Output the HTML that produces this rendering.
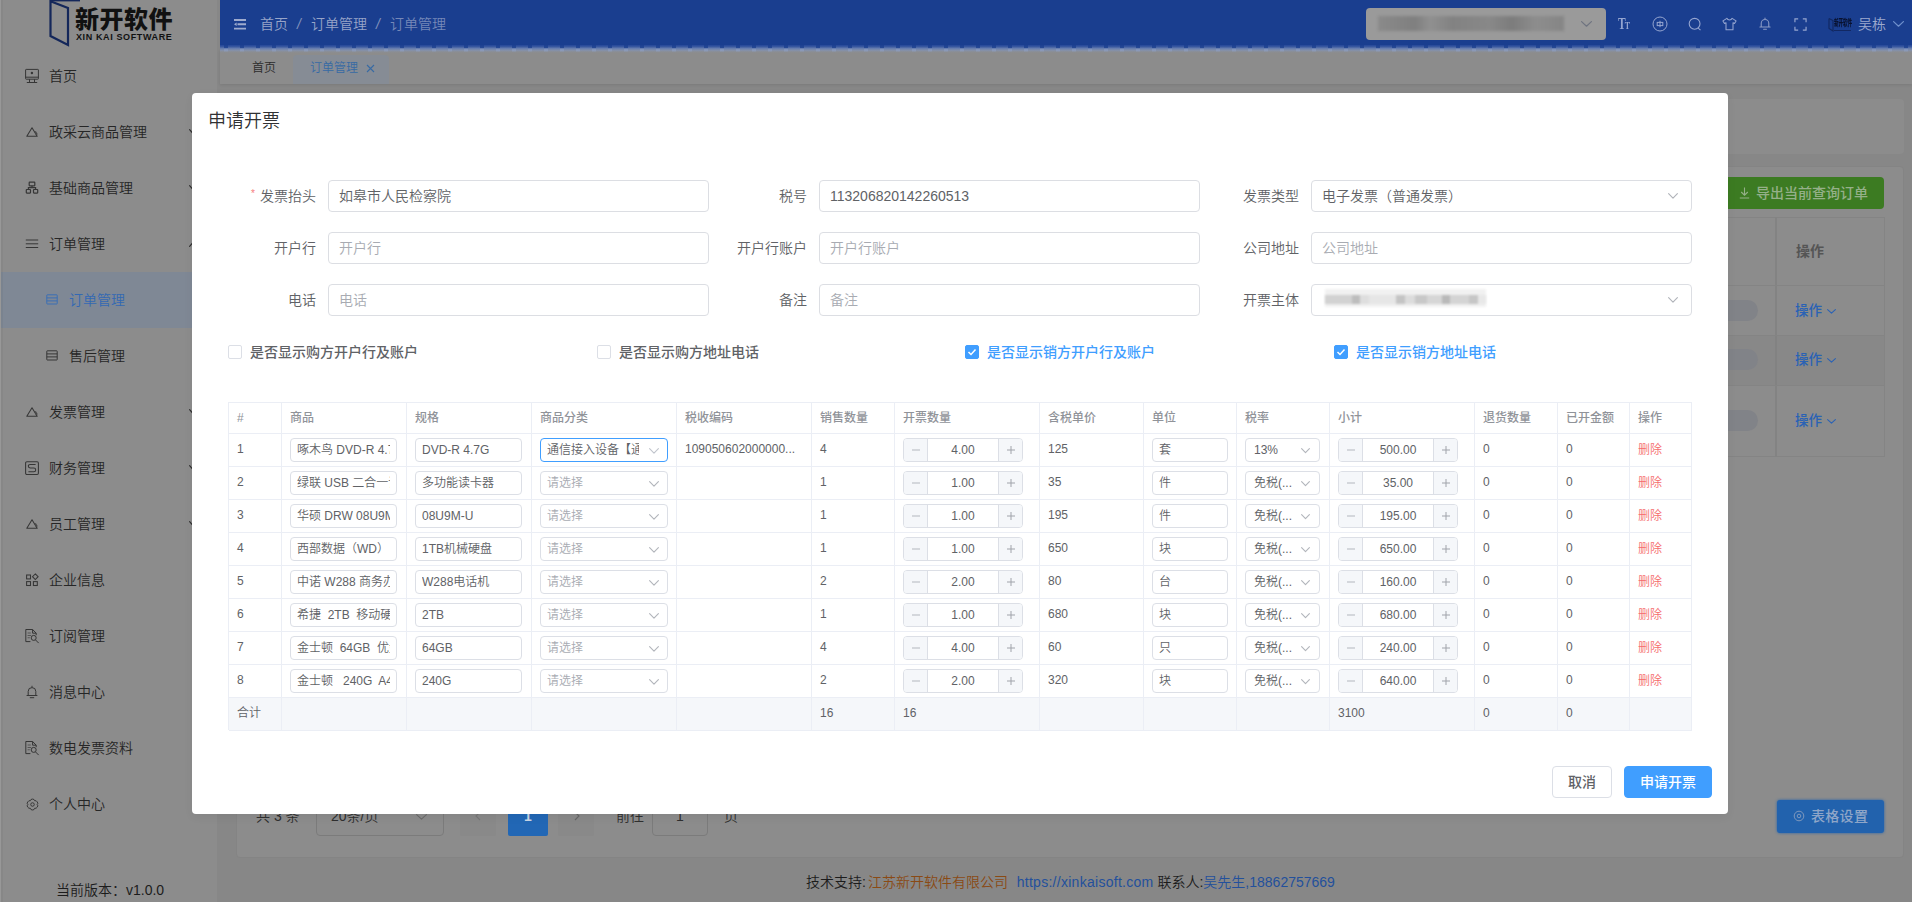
<!DOCTYPE html><html lang="zh-CN"><head><meta charset="utf-8"><title>订单管理</title><style>
*{box-sizing:border-box;margin:0;padding:0}
html,body{width:1912px;height:902px;overflow:hidden;background:#878787}
body{font-family:"Liberation Sans","Noto Sans CJK SC",sans-serif;font-weight:350;font-size:14px;color:#606266;-webkit-font-smoothing:antialiased}
#app{position:relative;width:1912px;height:902px;overflow:hidden;background:#878787}
.abs{position:absolute}
.t{position:absolute;white-space:nowrap;line-height:1}
/* sidebar */
#side{position:absolute;left:0;top:0;width:220px;height:902px;background:#8c8c8c;border-right:3px solid #878787}
.mi{position:absolute;left:0;width:217px;height:56px}
.mi .tx{position:absolute;left:49px;top:0;line-height:56px;font-size:14px;color:#262626;white-space:nowrap}
.mi.sub .tx{left:69px}
.mi svg{position:absolute}
.mi.act{background:#7f8895}
.mi.act .tx{color:#3369b3}
/* header */
#hdr{position:absolute;left:220px;top:0;width:1692px;height:46px;background:#1a3e8f}
#hdrf{position:absolute;z-index:2;left:220px;top:45px;width:1692px;height:8px;background:repeating-linear-gradient(90deg,rgba(26,62,143,.75) 0,rgba(26,62,143,.75) 4px,rgba(26,62,143,0) 4px,rgba(26,62,143,0) 16px) 4px 0/100% 3px no-repeat,repeating-linear-gradient(90deg,rgba(150,170,215,.35) 0,rgba(150,170,215,.35) 4px,rgba(0,0,0,0) 4px,rgba(0,0,0,0) 16px) 4px 3.500px/100% 2.500px no-repeat,linear-gradient(#23469a 0,#3b5a9f 22%,#6a80b0 45%,#8490a8 68%,#8b8e94 85%,#8c8c8c 100%)}
#tabs{position:absolute;left:220px;top:50px;width:1692px;height:34px;background:#8c8c8c;z-index:0;box-shadow:0 1px 3px rgba(0,0,0,.1)}
.card{position:absolute;background:#8c8c8c;border-radius:4px}
/* modal */
#dlg{position:absolute;left:192px;top:93px;width:1536px;height:721px;background:#fff;border-radius:4px;box-shadow:0 3px 10px rgba(0,0,0,.05)}
.lbl{position:absolute;width:100px;height:32px;line-height:32px;text-align:right;padding-right:12px;font-size:14px;color:#606266;white-space:nowrap}
.lbl i{font-style:normal;color:#f67c7c;margin-right:5px;font-size:10px;position:relative;top:-4px}
.inp{position:absolute;height:32px;border:1px solid #dcdee3;border-radius:4px;background:#fff;line-height:30px;padding:0 10px;font-size:14px;color:#606266;white-space:nowrap;overflow:hidden}
.ph{color:#a8abb2 !important}
.cb{position:absolute;width:14px;height:14px;border:1px solid #dcdfe6;border-radius:2px;background:#fff}
.cb.on{background:#409eff;border-color:#409eff}
.cbl{position:absolute;font-size:14px;font-weight:500;color:#606266;line-height:14px;white-space:nowrap}
.cbl.on{color:#409eff}
/* table */
#tb{position:absolute;left:228px;top:402px;width:1464px;height:328px;border:1px solid #ebeef5;border-right:0;border-bottom:0;font-size:12px}
.tr{position:absolute;left:0;width:1463px;border-bottom:1px solid #ebeef5}
.td{position:absolute;top:0;bottom:0;border-right:1px solid #ebeef5}
.th{color:#909399;font-weight:500}
.ct{position:absolute;left:8px;white-space:nowrap;line-height:23px;top:4px;font-size:12px}
.si{position:absolute;top:4px;height:24px;border:1px solid #dcdfe6;border-radius:4px;background:#fff;line-height:22px;padding:0 6px;font-size:12px;color:#606266;white-space:nowrap}
.si u{display:block;text-decoration:none;overflow:hidden;height:22px;white-space:pre}
.num{position:absolute;top:4px;width:120px;height:24px;border:1px solid #dcdfe6;border-radius:4px;background:#fff;overflow:hidden}
.num b{position:absolute;top:0;width:24px;height:22px;background:#f5f7fa;font-weight:400}
.num b.l{left:0;border-right:1px solid #dcdfe6}
.num b.r{right:0;border-left:1px solid #dcdfe6}
.num span{position:absolute;left:24px;right:24px;top:0;text-align:center;line-height:22px;font-size:12px;color:#606266}
.btn{position:absolute;height:32px;border-radius:4px;font-size:14px;font-weight:500;line-height:30px;text-align:center;white-space:nowrap}
</style></head><body><div id="app">
<div id="side">
<svg class="abs" style="left:48px;top:0" width="34" height="47" viewBox="0 0 34 47"><path d="M2.5 0 L2.5 36 L20 45 L20 8 L2.5 1.2" fill="none" stroke="#14275a" stroke-width="2.2" stroke-linejoin="miter"/><path d="M2.5 0.6 L32 0.6" stroke="#14275a" stroke-width="1.6"/></svg>
<div class="t" style="left:75px;top:8px;font-size:24px;font-weight:900;color:#111;letter-spacing:0.5px">新开软件</div>
<div class="t" style="left:76px;top:33px;font-size:9px;font-weight:700;color:#111;letter-spacing:0.62px">XIN KAI SOFTWARE</div>
<div class="mi" style="top:48px"><svg style="left:24px;top:20px" width="16" height="16" viewBox="0 0 16 16" fill="none" stroke="#363636" stroke-width="1"><rect x="1.600" y="1.400" width="12.800" height="9.800" rx="0.600"/><path d="M1.600 9.200h12.800M5.500 11.200v3.200M10.500 11.200v3.200M2.800 14.500h10.400"/><circle cx="7.900" cy="5" r="1.200" fill="#363636" stroke="none"/></svg><span class="tx">首页</span></div>
<div class="mi" style="top:104px"><svg style="left:25px;top:22px" width="14" height="12" viewBox="0 0 14 12" fill="none" stroke="#363636" stroke-width="1.050" stroke-linejoin="round"><path d="M7 1.800L12.200 10.200H1.800Z"/><path d="M10 5.600L12 8.800" stroke="#4a4a4a" stroke-width="1.900" stroke-linecap="butt"/></svg><span class="tx">政采云商品管理</span><svg class="abs" style="left:189px;top:25px;" width="9" height="6" viewBox="0 0 9 6"><path d="M0.6 0.6 L4.5 5.2 L8.4 0.6" fill="none" stroke="#2b2b2b" stroke-width="1.1" stroke-linecap="round" stroke-linejoin="round"/></svg></div>
<div class="mi" style="top:160px"><svg style="left:25px;top:21px" width="14" height="14" viewBox="0 0 14 14" fill="none" stroke="#363636" stroke-width="1.200"><rect x="4.200" y="1.200" width="5.600" height="3.600" rx="0.500"/><rect x="1.300" y="8.500" width="4.200" height="3.600" rx="0.500"/><rect x="8.500" y="8.500" width="4.200" height="3.600" rx="0.500"/><path d="M7 4.800v1.900M3.400 8.500V6.700h7.200v1.800"/></svg><span class="tx">基础商品管理</span><svg class="abs" style="left:189px;top:25px;" width="9" height="6" viewBox="0 0 9 6"><path d="M0.6 0.6 L4.5 5.2 L8.4 0.6" fill="none" stroke="#2b2b2b" stroke-width="1.1" stroke-linecap="round" stroke-linejoin="round"/></svg></div>
<div class="mi" style="top:216px"><svg style="left:25px;top:22px" width="14" height="12" viewBox="0 0 14 12" fill="none" stroke="#363636" stroke-width="1"><path d="M0.800 2h12.400M0.800 5.800h12.400M0.800 9.500h12.400"/></svg><span class="tx">订单管理</span><svg class="abs" style="left:189px;top:25px;transform:rotate(180deg);" width="9" height="6" viewBox="0 0 9 6"><path d="M0.6 0.6 L4.5 5.2 L8.4 0.6" fill="none" stroke="#2b2b2b" stroke-width="1.1" stroke-linecap="round" stroke-linejoin="round"/></svg></div>
<div class="mi sub act" style="top:272px"><svg style="left:46px;top:22px" width="12" height="11" viewBox="0 0 12 11" fill="none" stroke="#3b6fb5" stroke-width="1"><rect x="0.800" y="0.800" width="10.400" height="9.200" rx="0.500"/><path d="M0.800 3.900h10.400M0.800 6.900h10.400"/></svg><span class="tx">订单管理</span></div>
<div class="mi sub" style="top:328px"><svg style="left:46px;top:22px" width="12" height="11" viewBox="0 0 12 11" fill="none" stroke="#363636" stroke-width="1"><rect x="0.800" y="0.800" width="10.400" height="9.200" rx="0.500"/><path d="M0.800 3.900h10.400M0.800 6.900h10.400"/></svg><span class="tx">售后管理</span></div>
<div class="mi" style="top:384px"><svg style="left:25px;top:22px" width="14" height="12" viewBox="0 0 14 12" fill="none" stroke="#363636" stroke-width="1.050" stroke-linejoin="round"><path d="M7 1.800L12.200 10.200H1.800Z"/><path d="M10 5.600L12 8.800" stroke="#4a4a4a" stroke-width="1.900" stroke-linecap="butt"/></svg><span class="tx">发票管理</span><svg class="abs" style="left:189px;top:25px;" width="9" height="6" viewBox="0 0 9 6"><path d="M0.6 0.6 L4.5 5.2 L8.4 0.6" fill="none" stroke="#2b2b2b" stroke-width="1.1" stroke-linecap="round" stroke-linejoin="round"/></svg></div>
<div class="mi" style="top:440px"><svg style="left:24px;top:20px" width="16" height="16" viewBox="0 0 16 16" fill="none" stroke="#363636" stroke-width="1.050"><rect x="1.600" y="1.700" width="12.800" height="12.800" rx="1.300"/><path d="M11.600 4.400H6.200Q4.300 4.400 4.300 6.100Q4.300 8 6.200 8H9.800Q11.700 8 11.700 9.900Q11.700 11.800 9.800 11.800H4.400"/></svg><span class="tx">财务管理</span><svg class="abs" style="left:189px;top:25px;" width="9" height="6" viewBox="0 0 9 6"><path d="M0.6 0.6 L4.5 5.2 L8.4 0.6" fill="none" stroke="#2b2b2b" stroke-width="1.1" stroke-linecap="round" stroke-linejoin="round"/></svg></div>
<div class="mi" style="top:496px"><svg style="left:25px;top:22px" width="14" height="12" viewBox="0 0 14 12" fill="none" stroke="#363636" stroke-width="1.050" stroke-linejoin="round"><path d="M7 1.800L12.200 10.200H1.800Z"/><path d="M10 5.600L12 8.800" stroke="#4a4a4a" stroke-width="1.900" stroke-linecap="butt"/></svg><span class="tx">员工管理</span><svg class="abs" style="left:189px;top:25px;" width="9" height="6" viewBox="0 0 9 6"><path d="M0.6 0.6 L4.5 5.2 L8.4 0.6" fill="none" stroke="#2b2b2b" stroke-width="1.1" stroke-linecap="round" stroke-linejoin="round"/></svg></div>
<div class="mi" style="top:552px"><svg style="left:25px;top:21px" width="14" height="14" viewBox="0 0 14 14" fill="none" stroke="#363636" stroke-width="1.050"><rect x="1.600" y="2" width="3.900" height="3.900"/><rect x="1.600" y="8.600" width="3.900" height="3.900"/><rect x="8.400" y="8.600" width="3.900" height="3.900"/><path d="M10.300 0.900L13.100 3.700L10.300 6.500L7.500 3.700Z"/></svg><span class="tx">企业信息</span></div>
<div class="mi" style="top:608px"><svg style="left:24px;top:20px" width="16" height="16" viewBox="0 0 16 16" fill="none" stroke="#363636" stroke-width="1"><path d="M8.600 1.500H1.800V13.600H6.400M8.600 1.500L12.200 5.200V7.200M8.600 1.500V5.200H12.200"/><path d="M3.600 5h3.200M3.600 7.400h3.600M3.600 9.800h2.200" stroke="#555" stroke-width="1.050"/><circle cx="9.700" cy="9.900" r="2.500"/><path d="M11.500 11.900L14.700 15.100"/></svg><span class="tx">订阅管理</span></div>
<div class="mi" style="top:664px"><svg style="left:25px;top:21px" width="14" height="14" viewBox="0 0 14 14" fill="none" stroke="#363636" stroke-width="1" stroke-linecap="round" stroke-linejoin="round"><path d="M7 1.200v0.800M3.200 10.400V6.400a3.800 3.800 0 017.600 0v4M2 10.500h10M5.200 12.700h3.600"/></svg><span class="tx">消息中心</span></div>
<div class="mi" style="top:720px"><svg style="left:24px;top:20px" width="16" height="16" viewBox="0 0 16 16" fill="none" stroke="#363636" stroke-width="1"><path d="M8.600 1.500H1.800V13.600H6.400M8.600 1.500L12.200 5.200V7.200M8.600 1.500V5.200H12.200"/><path d="M3.600 5h3.200M3.600 7.400h3.600M3.600 9.800h2.200" stroke="#555" stroke-width="1.050"/><circle cx="9.700" cy="9.900" r="2.500"/><path d="M11.500 11.900L14.700 15.100"/></svg><span class="tx">数电发票资料</span></div>
<div class="mi" style="top:776px"><svg style="left:25.500px;top:21.500px" width="13" height="13" viewBox="0 0 14 14" fill="none" stroke="#363636" stroke-width="1.050" stroke-linejoin="round"><path d="M5.400 1.600Q7 0.700 8.600 1.600L9.300 2.900L10.900 3Q12.300 4 12.800 5.700L12 7L12.800 8.400Q12.300 10.100 10.900 11L9.300 11.100L8.600 12.500Q7 13.300 5.400 12.500L4.700 11.100L3.100 11Q1.700 10.100 1.200 8.400L2 7L1.200 5.700Q1.700 4 3.100 3L4.700 2.900Z"/><circle cx="7" cy="7" r="1.900"/></svg><span class="tx">个人中心</span></div>
<div class="t" style="left:56px;top:883px;font-size:14px;color:#1c1c1c">当前版本：v1.0.0</div>
<div class="abs" style="left:0;top:0;width:1px;height:902px;background:#989898"></div><div class="abs" style="left:1px;top:0;width:2px;height:902px;background:rgba(0,0,0,.035)"></div>
</div>
<div id="hdrf"></div><div id="hdr">
<svg class="abs" style="left:14px;top:19px" width="12" height="11" viewBox="0 0 12 11"><path d="M0 1h12M3.5 5.3h8.5M0 9.6h12" stroke="#9eabce" stroke-width="1.9"/><path d="M0 5.3L2.6 3.6V7z" fill="#9eabce"/></svg>
<div class="t" style="left:40px;top:17px;font-size:14px;color:#98a5c8">首页</div>
<div class="t" style="left:77px;top:17px;font-size:14px;color:#8292bc;font-style:italic">/</div>
<div class="t" style="left:91px;top:17px;font-size:14px;color:#98a5c8">订单管理</div>
<div class="t" style="left:156px;top:17px;font-size:14px;color:#8292bc;font-style:italic">/</div>
<div class="t" style="left:170px;top:17px;font-size:14px;color:#7688b8">订单管理</div>
<div class="abs" style="left:1146px;top:8px;width:240px;height:32px;background:#9a9a9a;border-radius:4px"></div>
<div class="abs" style="left:1158px;top:16px;width:186px;height:15px;background:linear-gradient(90deg,#8a8a8a,#7f7f7f 20%,#909090 28%,#828282 40%,#888 60%,#7c7c7c 72%,#8d8d8d 85%,#858585);filter:blur(1.5px)"></div>
<svg class="abs" style="left:1361px;top:21px;" width="11" height="6" viewBox="0 0 11 6"><path d="M0.6 0.6 L5.5 5.2 L10.4 0.6" fill="none" stroke="#6f7480" stroke-width="1.2" stroke-linecap="round" stroke-linejoin="round"/></svg>
<div class="t" style="left:1397.500px;top:16px;font-family:'Liberation Serif',serif;font-weight:700;font-size:16px;color:#95a5d0;letter-spacing:-1.200px;transform:scaleX(.72);transform-origin:0 0">T<span style="font-size:11px">T</span></div>
<svg class="abs" style="left:1432px;top:16px" width="16" height="16" viewBox="0 0 16 16" fill="none" stroke="#95a5d0" stroke-width="1"><circle cx="8" cy="8" r="7"/><rect x="5.200" y="6.400" width="5.600" height="3.200"/><path d="M8 4.800v6.400"/></svg>
<svg class="abs" style="left:1468px;top:17px" width="14" height="14" viewBox="0 0 14 14" fill="none" stroke="#95a5d0" stroke-width="1.1"><circle cx="6.600" cy="6.800" r="5.400"/><path d="M10.200 11.200l2.300 1.900"/></svg>
<svg class="abs" style="left:1502px;top:17px" width="15" height="14" viewBox="0 0 17 16" fill="none" stroke="#95a5d0" stroke-width="1.2" stroke-linejoin="round"><path d="M5.500 1.500L1 4.500l1.800 3 1.700-1v8h8v-8l1.700 1 1.800-3-4.500-3c-.5 1.200-1.600 2-3 2s-2.500-.8-3-2z"/></svg>
<svg class="abs" style="left:1538px;top:17px" width="14" height="14" viewBox="0 0 16 17" fill="none" stroke="#8c9cc6" stroke-width="1.300" stroke-linecap="round"><path d="M8 1.200v1.200M3.400 12V7.600a4.600 4.600 0 019.200 0V12M1.800 12.200h12.400M6.300 14.800h3.400"/></svg>
<svg class="abs" style="left:1573.500px;top:17.500px" width="13" height="13" viewBox="0 0 14 14" fill="none" stroke="#95a5d0" stroke-width="1.250"><path d="M1 4.500V1h3.500M9.500 1H13v3.500M13 9.500V13H9.500M4.500 13H1V9.500"/></svg>
<svg class="abs" style="left:1608px;top:18px" width="6" height="14" viewBox="0 0 6 14"><path d="M1 0.500V10.500L5 13V2.500L1 0.500" fill="none" stroke="#12275f" stroke-width="1.100"/></svg>
<div class="t" style="left:1614px;top:20px;font-size:4.600px;font-weight:900;color:#08112e;letter-spacing:-0.100px;transform:scaleY(1.900);transform-origin:0 0">新开软件</div>
<div class="abs" style="left:1614px;top:29.500px;width:17px;height:1px;background:#0d1a45;opacity:.6"></div>
<div class="t" style="left:1638px;top:17px;font-size:14px;color:#9eabce">吴栋</div>
<svg class="abs" style="left:1673px;top:21px;" width="11" height="6" viewBox="0 0 11 6"><path d="M0.6 0.6 L5.5 5.2 L10.4 0.6" fill="none" stroke="#6f90cc" stroke-width="1.2" stroke-linecap="round" stroke-linejoin="round"/></svg>
</div>
<div id="tabs">
<div class="t" style="left:32px;top:12px;font-size:12px;color:#2b2b2b">首页</div>
<div class="abs" style="left:73px;top:5px;width:96px;height:29px;background:#868c95;border-radius:4px 4px 0 0"></div>
<div class="t" style="left:90px;top:12px;font-size:12px;color:#376aa4">订单管理</div>
<svg class="abs" style="left:146px;top:14px" width="9" height="9" viewBox="0 0 9 9"><path d="M1 1l7 7M8 1l-7 7" stroke="#376aa4" stroke-width="1.1"/></svg>
</div>
<div class="card" style="left:236px;top:99px;width:1668px;height:55px"></div>
<div class="card" style="left:236px;top:166px;width:1668px;height:692px;border:1px solid #848484"></div>
<div class="abs" style="left:1700px;top:177px;width:184px;height:32px;border-radius:4px;background:#3c7b22"></div>
<svg class="abs" style="left:1739px;top:187px" width="11" height="12" viewBox="0 0 11 12" fill="none" stroke="#95b089" stroke-width="1.1"><path d="M5.500 0.500v7.500M2.200 5l3.300 3.200L8.800 5M0.800 11h9.400"/></svg>
<div class="t" style="left:1756px;top:186px;font-size:14px;font-weight:500;color:#95b089">导出当前查询订单</div>
<div class="abs" style="left:1700px;top:217px;width:185px;height:240px;border:1px solid #848484;border-left:0"></div>
<div class="abs" style="left:1775px;top:217px;width:2px;height:240px;background:#838383"></div>
<div class="abs" style="left:1700px;top:285px;width:184px;height:1px;background:#848484"></div>
<div class="abs" style="left:1700px;top:335px;width:184px;height:1px;background:#848484"></div>
<div class="abs" style="left:1700px;top:385px;width:184px;height:1px;background:#848484"></div>
<div class="abs" style="left:1700px;top:336px;width:184px;height:49px;background:#888"></div>
<div class="abs" style="left:1775px;top:336px;width:2px;height:49px;background:#828282"></div>
<div class="t" style="left:1796px;top:244px;font-size:14px;font-weight:700;color:#555">操作</div>
<div class="abs" style="left:1700px;top:300px;width:58px;height:21px;border-radius:0 11px 11px 0;background:#818388"></div>
<div class="t" style="left:1795px;top:304px;font-size:13.500px;font-weight:500;color:#2a62b5">操作</div>
<svg class="abs" style="left:1827px;top:309px;" width="9" height="5" viewBox="0 0 9 5"><path d="M0.6 0.6 L4.5 4.2 L8.4 0.6" fill="none" stroke="#2a62b5" stroke-width="1.1" stroke-linecap="round" stroke-linejoin="round"/></svg>
<div class="abs" style="left:1700px;top:349px;width:58px;height:21px;border-radius:0 11px 11px 0;background:#818388"></div>
<div class="t" style="left:1795px;top:353px;font-size:13.500px;font-weight:500;color:#2a62b5">操作</div>
<svg class="abs" style="left:1827px;top:358px;" width="9" height="5" viewBox="0 0 9 5"><path d="M0.6 0.6 L4.5 4.2 L8.4 0.6" fill="none" stroke="#2a62b5" stroke-width="1.1" stroke-linecap="round" stroke-linejoin="round"/></svg>
<div class="abs" style="left:1700px;top:410px;width:58px;height:21px;border-radius:0 11px 11px 0;background:#818388"></div>
<div class="t" style="left:1795px;top:414px;font-size:13.500px;font-weight:500;color:#2a62b5">操作</div>
<svg class="abs" style="left:1827px;top:419px;" width="9" height="5" viewBox="0 0 9 5"><path d="M0.6 0.6 L4.5 4.2 L8.4 0.6" fill="none" stroke="#2a62b5" stroke-width="1.1" stroke-linecap="round" stroke-linejoin="round"/></svg>
<div class="t" style="left:256px;top:809px;font-size:14px;color:#2f2f2f">共 3 条</div>
<div class="abs" style="left:316px;top:803px;width:128px;height:33px;border:1px solid #7b7b7b;border-radius:4px"></div>
<div class="t" style="left:331px;top:809px;font-size:14px;color:#2f2f2f">20条/页</div>
<svg class="abs" style="left:416px;top:814px;" width="11" height="6" viewBox="0 0 11 6"><path d="M0.6 0.6 L5.5 5.2 L10.4 0.6" fill="none" stroke="#6b6b6b" stroke-width="1.1" stroke-linecap="round" stroke-linejoin="round"/></svg>
<div class="abs" style="left:460px;top:803px;width:36px;height:33px;background:#898989;border-radius:2px"></div>
<svg class="abs" style="left:475px;top:811px" width="6" height="10" viewBox="0 0 6 10"><path d="M5 1L1 5l4 4" fill="none" stroke="#777" stroke-width="1.1"/></svg>
<div class="abs" style="left:508px;top:803px;width:40px;height:33px;background:#2267b5;border-radius:2px"></div>
<div class="t" style="left:524px;top:809px;font-size:14px;font-weight:700;color:#c8d4e4">1</div>
<div class="abs" style="left:558px;top:803px;width:36px;height:33px;background:#898989;border-radius:2px"></div>
<svg class="abs" style="left:574px;top:811px" width="6" height="10" viewBox="0 0 6 10"><path d="M1 1l4 4-4 4" fill="none" stroke="#666" stroke-width="1.1"/></svg>
<div class="t" style="left:616px;top:809px;font-size:14px;color:#2f2f2f">前往</div>
<div class="abs" style="left:652px;top:803px;width:56px;height:33px;border:1px solid #7b7b7b;border-radius:4px"></div>
<div class="t" style="left:676px;top:809px;font-size:14px;color:#2f2f2f">1</div>
<div class="t" style="left:724px;top:809px;font-size:14px;color:#2f2f2f">页</div>
<div class="abs" style="left:1777px;top:800px;width:107px;height:33px;border-radius:3px;background:#2262ad;box-shadow:0 0 3px #2262ad"></div>
<svg class="abs" style="left:1793px;top:810px" width="12" height="12" viewBox="0 0 12 12" fill="none" stroke="#7f98bd" stroke-width="1"><circle cx="6" cy="6" r="4.800"/><circle cx="6" cy="6" r="1.800"/></svg>
<div class="t" style="left:1811px;top:809px;font-size:14px;font-weight:500;color:#8fa6c8;letter-spacing:.3px">表格设置</div>
<div class="t" style="left:806px;top:875px;font-size:14px;color:#1c1c1c">技术支持:<span style="color:#8a4a14;margin-left:2px">江苏新开软件有限公司</span>&nbsp; <span style="color:#23509c;letter-spacing:.28px;margin-left:1px">https://xinkaisoft.com</span> 联系人:<span style="color:#23509c">吴先生,18862757669</span></div>
<div id="dlg"></div>
<div class="t" style="left:208px;top:112px;font-size:18px;color:#303133">申请开票</div>
<div class="lbl" style="left:228px;top:180px"><i>*</i>发票抬头</div>
<div class="inp" style="left:328px;top:180px;width:381px">如皋市人民检察院</div>
<div class="lbl" style="left:228px;top:232px">开户行</div>
<div class="inp ph" style="left:328px;top:232px;width:381px">开户行</div>
<div class="lbl" style="left:228px;top:284px">电话</div>
<div class="inp ph" style="left:328px;top:284px;width:381px">电话</div>
<div class="lbl" style="left:719px;top:180px">税号</div>
<div class="inp" style="left:819px;top:180px;width:381px">113206820142260513</div>
<div class="lbl" style="left:719px;top:232px">开户行账户</div>
<div class="inp ph" style="left:819px;top:232px;width:381px">开户行账户</div>
<div class="lbl" style="left:719px;top:284px">备注</div>
<div class="inp ph" style="left:819px;top:284px;width:381px">备注</div>
<div class="lbl" style="left:1211px;top:180px">发票类型</div>
<div class="inp" style="left:1311px;top:180px;width:381px">电子发票（普通发票）</div>
<svg class="abs" style="left:1668px;top:193px;" width="10" height="6" viewBox="0 0 10 6"><path d="M0.6 0.6 L5.0 5.2 L9.4 0.6" fill="none" stroke="#b0b3b9" stroke-width="1.1" stroke-linecap="round" stroke-linejoin="round"/></svg>
<div class="lbl" style="left:1211px;top:232px">公司地址</div>
<div class="inp ph" style="left:1311px;top:232px;width:381px">公司地址</div>
<div class="lbl" style="left:1211px;top:284px">开票主体</div>
<div class="inp" style="left:1311px;top:284px;width:381px"></div>
<svg class="abs" style="left:1668px;top:297px;" width="10" height="6" viewBox="0 0 10 6"><path d="M0.6 0.6 L5.0 5.2 L9.4 0.6" fill="none" stroke="#b0b3b9" stroke-width="1.1" stroke-linecap="round" stroke-linejoin="round"/></svg>
<div class="abs" style="left:1325px;top:289px;width:161px;height:18px;background:#f1f1f1;filter:blur(1px)"></div>
<div class="abs" style="left:1325px;top:295px;width:161px;height:9px;background:linear-gradient(90deg,#d2d2d2 0px,#d2d2d2 27px,#bdbdbd 27px,#bdbdbd 35.5px,#dedede 35.5px,#dedede 44px,#e6e6e6 44px,#e6e6e6 71px,#c4c4c4 71px,#c4c4c4 80.5px,#dcdcdc 80.5px,#dcdcdc 90px,#c8c8c8 90px,#c8c8c8 102.5px,#d6d6d6 102.5px,#d6d6d6 117px,#b9b9b9 117px,#b9b9b9 125.5px,#d4d4d4 125.5px,#d4d4d4 144px,#c6c6c6 144px,#c6c6c6 152.7px,#e8e8e8 152.7px,#e8e8e8 161px);filter:blur(.9px)"></div>
<div class="cb" style="left:228px;top:345px"></div>
<div class="cbl" style="left:250px;top:345px">是否显示购方开户行及账户</div>
<div class="cb" style="left:597px;top:345px"></div>
<div class="cbl" style="left:619px;top:345px">是否显示购方地址电话</div>
<div class="cb on" style="left:965px;top:345px"></div>
<svg class="abs" style="left:967px;top:348px" width="10" height="8" viewBox="0 0 10 8"><path d="M1.500 4l2.500 2.500L8.500 1.500" fill="none" stroke="#fff" stroke-width="1.500"/></svg>
<div class="cbl on" style="left:987px;top:345px">是否显示销方开户行及账户</div>
<div class="cb on" style="left:1334px;top:345px"></div>
<svg class="abs" style="left:1336px;top:348px" width="10" height="8" viewBox="0 0 10 8"><path d="M1.500 4l2.500 2.500L8.500 1.500" fill="none" stroke="#fff" stroke-width="1.500"/></svg>
<div class="cbl on" style="left:1356px;top:345px">是否显示销方地址电话</div>
<div id="tb">
<div class="tr th" style="top:0;height:31px">
<div class="td" style="left:0px;width:53px"><span class="ct">#</span></div>
<div class="td" style="left:53px;width:125px"><span class="ct">商品</span></div>
<div class="td" style="left:178px;width:125px"><span class="ct">规格</span></div>
<div class="td" style="left:303px;width:145px"><span class="ct">商品分类</span></div>
<div class="td" style="left:448px;width:135px"><span class="ct">税收编码</span></div>
<div class="td" style="left:583px;width:83px"><span class="ct">销售数量</span></div>
<div class="td" style="left:666px;width:145px"><span class="ct">开票数量</span></div>
<div class="td" style="left:811px;width:104px"><span class="ct">含税单价</span></div>
<div class="td" style="left:915px;width:93px"><span class="ct">单位</span></div>
<div class="td" style="left:1008px;width:93px"><span class="ct">税率</span></div>
<div class="td" style="left:1101px;width:145px"><span class="ct">小计</span></div>
<div class="td" style="left:1246px;width:83px"><span class="ct">退货数量</span></div>
<div class="td" style="left:1329px;width:72px"><span class="ct">已开金额</span></div>
<div class="td" style="left:1401px;width:62px"><span class="ct">操作</span></div>
</div>
<div class="tr" style="top:31px;height:33px">
<div class="td" style="left:0px;width:53px"><span class="ct">1</span></div>
<div class="td" style="left:53px;width:125px"><div class="si" style="left:8px;width:107px"><u>啄木鸟 DVD-R 4.7G</u></div></div>
<div class="td" style="left:178px;width:125px"><div class="si" style="left:8px;width:107px"><u>DVD-R 4.7G</u></div></div>
<div class="td" style="left:303px;width:145px"><div class="si" style="left:8px;width:128px;border-color:#409eff;padding-right:28px"><u>通信接入设备【通信</u></div><svg class="abs" style="left:117px;top:14px;" width="10" height="6" viewBox="0 0 10 6"><path d="M0.6 0.6 L5.0 5.2 L9.4 0.6" fill="none" stroke="#c0c4cc" stroke-width="1.1" stroke-linecap="round" stroke-linejoin="round"/></svg></div>
<div class="td" style="left:448px;width:135px"><span class="ct">109050602000000...</span></div>
<div class="td" style="left:583px;width:83px"><span class="ct">4</span></div>
<div class="td" style="left:666px;width:145px"><div class="num" style="left:8px"><b class="l"><svg class="abs" style="left:8px;top:10px" width="8" height="2"><path d="M0 1h8" stroke="#b4b7be" stroke-width="1.1"/></svg></b><span>4.00</span><b class="r"><svg class="abs" style="left:8px;top:7px" width="8" height="8"><path d="M0 4h8M4 0v8" stroke="#a0a3aa" stroke-width="1"/></svg></b></div></div>
<div class="td" style="left:811px;width:104px"><span class="ct">125</span></div>
<div class="td" style="left:915px;width:93px"><div class="si" style="left:8px;width:76px"><u>套</u></div></div>
<div class="td" style="left:1008px;width:93px"><div class="si" style="left:8px;width:75px;padding-left:8px;padding-right:20px"><u>13%</u></div><svg class="abs" style="left:63.5px;top:14px;" width="9" height="5.5" viewBox="0 0 9 5.5"><path d="M0.6 0.6 L4.5 4.7 L8.4 0.6" fill="none" stroke="#b2b5bb" stroke-width="1.1" stroke-linecap="round" stroke-linejoin="round"/></svg></div>
<div class="td" style="left:1101px;width:145px"><div class="num" style="left:8px"><b class="l"><svg class="abs" style="left:8px;top:10px" width="8" height="2"><path d="M0 1h8" stroke="#b4b7be" stroke-width="1.1"/></svg></b><span>500.00</span><b class="r"><svg class="abs" style="left:8px;top:7px" width="8" height="8"><path d="M0 4h8M4 0v8" stroke="#a0a3aa" stroke-width="1"/></svg></b></div></div>
<div class="td" style="left:1246px;width:83px"><span class="ct">0</span></div>
<div class="td" style="left:1329px;width:72px"><span class="ct">0</span></div>
<div class="td" style="left:1401px;width:62px"><span class="ct" style="color:#f56c6c;top:5px">删除</span></div>
</div>
<div class="tr" style="top:64px;height:33px">
<div class="td" style="left:0px;width:53px"><span class="ct">2</span></div>
<div class="td" style="left:53px;width:125px"><div class="si" style="left:8px;width:107px"><u>绿联 USB 二合一读卡器</u></div></div>
<div class="td" style="left:178px;width:125px"><div class="si" style="left:8px;width:107px"><u>多功能读卡器</u></div></div>
<div class="td" style="left:303px;width:145px"><div class="si ph" style="left:8px;width:128px"><u>请选择</u></div><svg class="abs" style="left:117px;top:14px;" width="10" height="6" viewBox="0 0 10 6"><path d="M0.6 0.6 L5.0 5.2 L9.4 0.6" fill="none" stroke="#b2b5bb" stroke-width="1.1" stroke-linecap="round" stroke-linejoin="round"/></svg></div>
<div class="td" style="left:448px;width:135px"><span class="ct"></span></div>
<div class="td" style="left:583px;width:83px"><span class="ct">1</span></div>
<div class="td" style="left:666px;width:145px"><div class="num" style="left:8px"><b class="l"><svg class="abs" style="left:8px;top:10px" width="8" height="2"><path d="M0 1h8" stroke="#b4b7be" stroke-width="1.1"/></svg></b><span>1.00</span><b class="r"><svg class="abs" style="left:8px;top:7px" width="8" height="8"><path d="M0 4h8M4 0v8" stroke="#a0a3aa" stroke-width="1"/></svg></b></div></div>
<div class="td" style="left:811px;width:104px"><span class="ct">35</span></div>
<div class="td" style="left:915px;width:93px"><div class="si" style="left:8px;width:76px"><u>件</u></div></div>
<div class="td" style="left:1008px;width:93px"><div class="si" style="left:8px;width:75px;padding-left:8px;padding-right:20px"><u>免税(...</u></div><svg class="abs" style="left:63.5px;top:14px;" width="9" height="5.5" viewBox="0 0 9 5.5"><path d="M0.6 0.6 L4.5 4.7 L8.4 0.6" fill="none" stroke="#b2b5bb" stroke-width="1.1" stroke-linecap="round" stroke-linejoin="round"/></svg></div>
<div class="td" style="left:1101px;width:145px"><div class="num" style="left:8px"><b class="l"><svg class="abs" style="left:8px;top:10px" width="8" height="2"><path d="M0 1h8" stroke="#b4b7be" stroke-width="1.1"/></svg></b><span>35.00</span><b class="r"><svg class="abs" style="left:8px;top:7px" width="8" height="8"><path d="M0 4h8M4 0v8" stroke="#a0a3aa" stroke-width="1"/></svg></b></div></div>
<div class="td" style="left:1246px;width:83px"><span class="ct">0</span></div>
<div class="td" style="left:1329px;width:72px"><span class="ct">0</span></div>
<div class="td" style="left:1401px;width:62px"><span class="ct" style="color:#f56c6c;top:5px">删除</span></div>
</div>
<div class="tr" style="top:97px;height:33px">
<div class="td" style="left:0px;width:53px"><span class="ct">3</span></div>
<div class="td" style="left:53px;width:125px"><div class="si" style="left:8px;width:107px"><u>华硕 DRW 08U9M</u></div></div>
<div class="td" style="left:178px;width:125px"><div class="si" style="left:8px;width:107px"><u>08U9M-U</u></div></div>
<div class="td" style="left:303px;width:145px"><div class="si ph" style="left:8px;width:128px"><u>请选择</u></div><svg class="abs" style="left:117px;top:14px;" width="10" height="6" viewBox="0 0 10 6"><path d="M0.6 0.6 L5.0 5.2 L9.4 0.6" fill="none" stroke="#b2b5bb" stroke-width="1.1" stroke-linecap="round" stroke-linejoin="round"/></svg></div>
<div class="td" style="left:448px;width:135px"><span class="ct"></span></div>
<div class="td" style="left:583px;width:83px"><span class="ct">1</span></div>
<div class="td" style="left:666px;width:145px"><div class="num" style="left:8px"><b class="l"><svg class="abs" style="left:8px;top:10px" width="8" height="2"><path d="M0 1h8" stroke="#b4b7be" stroke-width="1.1"/></svg></b><span>1.00</span><b class="r"><svg class="abs" style="left:8px;top:7px" width="8" height="8"><path d="M0 4h8M4 0v8" stroke="#a0a3aa" stroke-width="1"/></svg></b></div></div>
<div class="td" style="left:811px;width:104px"><span class="ct">195</span></div>
<div class="td" style="left:915px;width:93px"><div class="si" style="left:8px;width:76px"><u>件</u></div></div>
<div class="td" style="left:1008px;width:93px"><div class="si" style="left:8px;width:75px;padding-left:8px;padding-right:20px"><u>免税(...</u></div><svg class="abs" style="left:63.5px;top:14px;" width="9" height="5.5" viewBox="0 0 9 5.5"><path d="M0.6 0.6 L4.5 4.7 L8.4 0.6" fill="none" stroke="#b2b5bb" stroke-width="1.1" stroke-linecap="round" stroke-linejoin="round"/></svg></div>
<div class="td" style="left:1101px;width:145px"><div class="num" style="left:8px"><b class="l"><svg class="abs" style="left:8px;top:10px" width="8" height="2"><path d="M0 1h8" stroke="#b4b7be" stroke-width="1.1"/></svg></b><span>195.00</span><b class="r"><svg class="abs" style="left:8px;top:7px" width="8" height="8"><path d="M0 4h8M4 0v8" stroke="#a0a3aa" stroke-width="1"/></svg></b></div></div>
<div class="td" style="left:1246px;width:83px"><span class="ct">0</span></div>
<div class="td" style="left:1329px;width:72px"><span class="ct">0</span></div>
<div class="td" style="left:1401px;width:62px"><span class="ct" style="color:#f56c6c;top:5px">删除</span></div>
</div>
<div class="tr" style="top:130px;height:33px">
<div class="td" style="left:0px;width:53px"><span class="ct">4</span></div>
<div class="td" style="left:53px;width:125px"><div class="si" style="left:8px;width:107px"><u>西部数据（WD）</u></div></div>
<div class="td" style="left:178px;width:125px"><div class="si" style="left:8px;width:107px"><u>1TB机械硬盘</u></div></div>
<div class="td" style="left:303px;width:145px"><div class="si ph" style="left:8px;width:128px"><u>请选择</u></div><svg class="abs" style="left:117px;top:14px;" width="10" height="6" viewBox="0 0 10 6"><path d="M0.6 0.6 L5.0 5.2 L9.4 0.6" fill="none" stroke="#b2b5bb" stroke-width="1.1" stroke-linecap="round" stroke-linejoin="round"/></svg></div>
<div class="td" style="left:448px;width:135px"><span class="ct"></span></div>
<div class="td" style="left:583px;width:83px"><span class="ct">1</span></div>
<div class="td" style="left:666px;width:145px"><div class="num" style="left:8px"><b class="l"><svg class="abs" style="left:8px;top:10px" width="8" height="2"><path d="M0 1h8" stroke="#b4b7be" stroke-width="1.1"/></svg></b><span>1.00</span><b class="r"><svg class="abs" style="left:8px;top:7px" width="8" height="8"><path d="M0 4h8M4 0v8" stroke="#a0a3aa" stroke-width="1"/></svg></b></div></div>
<div class="td" style="left:811px;width:104px"><span class="ct">650</span></div>
<div class="td" style="left:915px;width:93px"><div class="si" style="left:8px;width:76px"><u>块</u></div></div>
<div class="td" style="left:1008px;width:93px"><div class="si" style="left:8px;width:75px;padding-left:8px;padding-right:20px"><u>免税(...</u></div><svg class="abs" style="left:63.5px;top:14px;" width="9" height="5.5" viewBox="0 0 9 5.5"><path d="M0.6 0.6 L4.5 4.7 L8.4 0.6" fill="none" stroke="#b2b5bb" stroke-width="1.1" stroke-linecap="round" stroke-linejoin="round"/></svg></div>
<div class="td" style="left:1101px;width:145px"><div class="num" style="left:8px"><b class="l"><svg class="abs" style="left:8px;top:10px" width="8" height="2"><path d="M0 1h8" stroke="#b4b7be" stroke-width="1.1"/></svg></b><span>650.00</span><b class="r"><svg class="abs" style="left:8px;top:7px" width="8" height="8"><path d="M0 4h8M4 0v8" stroke="#a0a3aa" stroke-width="1"/></svg></b></div></div>
<div class="td" style="left:1246px;width:83px"><span class="ct">0</span></div>
<div class="td" style="left:1329px;width:72px"><span class="ct">0</span></div>
<div class="td" style="left:1401px;width:62px"><span class="ct" style="color:#f56c6c;top:5px">删除</span></div>
</div>
<div class="tr" style="top:163px;height:33px">
<div class="td" style="left:0px;width:53px"><span class="ct">5</span></div>
<div class="td" style="left:53px;width:125px"><div class="si" style="left:8px;width:107px"><u>中诺 W288 商务办</u></div></div>
<div class="td" style="left:178px;width:125px"><div class="si" style="left:8px;width:107px"><u>W288电话机</u></div></div>
<div class="td" style="left:303px;width:145px"><div class="si ph" style="left:8px;width:128px"><u>请选择</u></div><svg class="abs" style="left:117px;top:14px;" width="10" height="6" viewBox="0 0 10 6"><path d="M0.6 0.6 L5.0 5.2 L9.4 0.6" fill="none" stroke="#b2b5bb" stroke-width="1.1" stroke-linecap="round" stroke-linejoin="round"/></svg></div>
<div class="td" style="left:448px;width:135px"><span class="ct"></span></div>
<div class="td" style="left:583px;width:83px"><span class="ct">2</span></div>
<div class="td" style="left:666px;width:145px"><div class="num" style="left:8px"><b class="l"><svg class="abs" style="left:8px;top:10px" width="8" height="2"><path d="M0 1h8" stroke="#b4b7be" stroke-width="1.1"/></svg></b><span>2.00</span><b class="r"><svg class="abs" style="left:8px;top:7px" width="8" height="8"><path d="M0 4h8M4 0v8" stroke="#a0a3aa" stroke-width="1"/></svg></b></div></div>
<div class="td" style="left:811px;width:104px"><span class="ct">80</span></div>
<div class="td" style="left:915px;width:93px"><div class="si" style="left:8px;width:76px"><u>台</u></div></div>
<div class="td" style="left:1008px;width:93px"><div class="si" style="left:8px;width:75px;padding-left:8px;padding-right:20px"><u>免税(...</u></div><svg class="abs" style="left:63.5px;top:14px;" width="9" height="5.5" viewBox="0 0 9 5.5"><path d="M0.6 0.6 L4.5 4.7 L8.4 0.6" fill="none" stroke="#b2b5bb" stroke-width="1.1" stroke-linecap="round" stroke-linejoin="round"/></svg></div>
<div class="td" style="left:1101px;width:145px"><div class="num" style="left:8px"><b class="l"><svg class="abs" style="left:8px;top:10px" width="8" height="2"><path d="M0 1h8" stroke="#b4b7be" stroke-width="1.1"/></svg></b><span>160.00</span><b class="r"><svg class="abs" style="left:8px;top:7px" width="8" height="8"><path d="M0 4h8M4 0v8" stroke="#a0a3aa" stroke-width="1"/></svg></b></div></div>
<div class="td" style="left:1246px;width:83px"><span class="ct">0</span></div>
<div class="td" style="left:1329px;width:72px"><span class="ct">0</span></div>
<div class="td" style="left:1401px;width:62px"><span class="ct" style="color:#f56c6c;top:5px">删除</span></div>
</div>
<div class="tr" style="top:196px;height:33px">
<div class="td" style="left:0px;width:53px"><span class="ct">6</span></div>
<div class="td" style="left:53px;width:125px"><div class="si" style="left:8px;width:107px"><u>希捷  2TB  移动硬盘</u></div></div>
<div class="td" style="left:178px;width:125px"><div class="si" style="left:8px;width:107px"><u>2TB</u></div></div>
<div class="td" style="left:303px;width:145px"><div class="si ph" style="left:8px;width:128px"><u>请选择</u></div><svg class="abs" style="left:117px;top:14px;" width="10" height="6" viewBox="0 0 10 6"><path d="M0.6 0.6 L5.0 5.2 L9.4 0.6" fill="none" stroke="#b2b5bb" stroke-width="1.1" stroke-linecap="round" stroke-linejoin="round"/></svg></div>
<div class="td" style="left:448px;width:135px"><span class="ct"></span></div>
<div class="td" style="left:583px;width:83px"><span class="ct">1</span></div>
<div class="td" style="left:666px;width:145px"><div class="num" style="left:8px"><b class="l"><svg class="abs" style="left:8px;top:10px" width="8" height="2"><path d="M0 1h8" stroke="#b4b7be" stroke-width="1.1"/></svg></b><span>1.00</span><b class="r"><svg class="abs" style="left:8px;top:7px" width="8" height="8"><path d="M0 4h8M4 0v8" stroke="#a0a3aa" stroke-width="1"/></svg></b></div></div>
<div class="td" style="left:811px;width:104px"><span class="ct">680</span></div>
<div class="td" style="left:915px;width:93px"><div class="si" style="left:8px;width:76px"><u>块</u></div></div>
<div class="td" style="left:1008px;width:93px"><div class="si" style="left:8px;width:75px;padding-left:8px;padding-right:20px"><u>免税(...</u></div><svg class="abs" style="left:63.5px;top:14px;" width="9" height="5.5" viewBox="0 0 9 5.5"><path d="M0.6 0.6 L4.5 4.7 L8.4 0.6" fill="none" stroke="#b2b5bb" stroke-width="1.1" stroke-linecap="round" stroke-linejoin="round"/></svg></div>
<div class="td" style="left:1101px;width:145px"><div class="num" style="left:8px"><b class="l"><svg class="abs" style="left:8px;top:10px" width="8" height="2"><path d="M0 1h8" stroke="#b4b7be" stroke-width="1.1"/></svg></b><span>680.00</span><b class="r"><svg class="abs" style="left:8px;top:7px" width="8" height="8"><path d="M0 4h8M4 0v8" stroke="#a0a3aa" stroke-width="1"/></svg></b></div></div>
<div class="td" style="left:1246px;width:83px"><span class="ct">0</span></div>
<div class="td" style="left:1329px;width:72px"><span class="ct">0</span></div>
<div class="td" style="left:1401px;width:62px"><span class="ct" style="color:#f56c6c;top:5px">删除</span></div>
</div>
<div class="tr" style="top:229px;height:33px">
<div class="td" style="left:0px;width:53px"><span class="ct">7</span></div>
<div class="td" style="left:53px;width:125px"><div class="si" style="left:8px;width:107px"><u>金士顿  64GB  优盘</u></div></div>
<div class="td" style="left:178px;width:125px"><div class="si" style="left:8px;width:107px"><u>64GB</u></div></div>
<div class="td" style="left:303px;width:145px"><div class="si ph" style="left:8px;width:128px"><u>请选择</u></div><svg class="abs" style="left:117px;top:14px;" width="10" height="6" viewBox="0 0 10 6"><path d="M0.6 0.6 L5.0 5.2 L9.4 0.6" fill="none" stroke="#b2b5bb" stroke-width="1.1" stroke-linecap="round" stroke-linejoin="round"/></svg></div>
<div class="td" style="left:448px;width:135px"><span class="ct"></span></div>
<div class="td" style="left:583px;width:83px"><span class="ct">4</span></div>
<div class="td" style="left:666px;width:145px"><div class="num" style="left:8px"><b class="l"><svg class="abs" style="left:8px;top:10px" width="8" height="2"><path d="M0 1h8" stroke="#b4b7be" stroke-width="1.1"/></svg></b><span>4.00</span><b class="r"><svg class="abs" style="left:8px;top:7px" width="8" height="8"><path d="M0 4h8M4 0v8" stroke="#a0a3aa" stroke-width="1"/></svg></b></div></div>
<div class="td" style="left:811px;width:104px"><span class="ct">60</span></div>
<div class="td" style="left:915px;width:93px"><div class="si" style="left:8px;width:76px"><u>只</u></div></div>
<div class="td" style="left:1008px;width:93px"><div class="si" style="left:8px;width:75px;padding-left:8px;padding-right:20px"><u>免税(...</u></div><svg class="abs" style="left:63.5px;top:14px;" width="9" height="5.5" viewBox="0 0 9 5.5"><path d="M0.6 0.6 L4.5 4.7 L8.4 0.6" fill="none" stroke="#b2b5bb" stroke-width="1.1" stroke-linecap="round" stroke-linejoin="round"/></svg></div>
<div class="td" style="left:1101px;width:145px"><div class="num" style="left:8px"><b class="l"><svg class="abs" style="left:8px;top:10px" width="8" height="2"><path d="M0 1h8" stroke="#b4b7be" stroke-width="1.1"/></svg></b><span>240.00</span><b class="r"><svg class="abs" style="left:8px;top:7px" width="8" height="8"><path d="M0 4h8M4 0v8" stroke="#a0a3aa" stroke-width="1"/></svg></b></div></div>
<div class="td" style="left:1246px;width:83px"><span class="ct">0</span></div>
<div class="td" style="left:1329px;width:72px"><span class="ct">0</span></div>
<div class="td" style="left:1401px;width:62px"><span class="ct" style="color:#f56c6c;top:5px">删除</span></div>
</div>
<div class="tr" style="top:262px;height:33px">
<div class="td" style="left:0px;width:53px"><span class="ct">8</span></div>
<div class="td" style="left:53px;width:125px"><div class="si" style="left:8px;width:107px"><u>金士顿   240G  A400</u></div></div>
<div class="td" style="left:178px;width:125px"><div class="si" style="left:8px;width:107px"><u>240G</u></div></div>
<div class="td" style="left:303px;width:145px"><div class="si ph" style="left:8px;width:128px"><u>请选择</u></div><svg class="abs" style="left:117px;top:14px;" width="10" height="6" viewBox="0 0 10 6"><path d="M0.6 0.6 L5.0 5.2 L9.4 0.6" fill="none" stroke="#b2b5bb" stroke-width="1.1" stroke-linecap="round" stroke-linejoin="round"/></svg></div>
<div class="td" style="left:448px;width:135px"><span class="ct"></span></div>
<div class="td" style="left:583px;width:83px"><span class="ct">2</span></div>
<div class="td" style="left:666px;width:145px"><div class="num" style="left:8px"><b class="l"><svg class="abs" style="left:8px;top:10px" width="8" height="2"><path d="M0 1h8" stroke="#b4b7be" stroke-width="1.1"/></svg></b><span>2.00</span><b class="r"><svg class="abs" style="left:8px;top:7px" width="8" height="8"><path d="M0 4h8M4 0v8" stroke="#a0a3aa" stroke-width="1"/></svg></b></div></div>
<div class="td" style="left:811px;width:104px"><span class="ct">320</span></div>
<div class="td" style="left:915px;width:93px"><div class="si" style="left:8px;width:76px"><u>块</u></div></div>
<div class="td" style="left:1008px;width:93px"><div class="si" style="left:8px;width:75px;padding-left:8px;padding-right:20px"><u>免税(...</u></div><svg class="abs" style="left:63.5px;top:14px;" width="9" height="5.5" viewBox="0 0 9 5.5"><path d="M0.6 0.6 L4.5 4.7 L8.4 0.6" fill="none" stroke="#b2b5bb" stroke-width="1.1" stroke-linecap="round" stroke-linejoin="round"/></svg></div>
<div class="td" style="left:1101px;width:145px"><div class="num" style="left:8px"><b class="l"><svg class="abs" style="left:8px;top:10px" width="8" height="2"><path d="M0 1h8" stroke="#b4b7be" stroke-width="1.1"/></svg></b><span>640.00</span><b class="r"><svg class="abs" style="left:8px;top:7px" width="8" height="8"><path d="M0 4h8M4 0v8" stroke="#a0a3aa" stroke-width="1"/></svg></b></div></div>
<div class="td" style="left:1246px;width:83px"><span class="ct">0</span></div>
<div class="td" style="left:1329px;width:72px"><span class="ct">0</span></div>
<div class="td" style="left:1401px;width:62px"><span class="ct" style="color:#f56c6c;top:5px">删除</span></div>
</div>
<div class="tr" style="top:295px;height:33px;background:#f5f7fa">
<div class="td" style="left:0px;width:53px"><span class="ct">合计</span></div>
<div class="td" style="left:53px;width:125px"></div>
<div class="td" style="left:178px;width:125px"></div>
<div class="td" style="left:303px;width:145px"></div>
<div class="td" style="left:448px;width:135px"></div>
<div class="td" style="left:583px;width:83px"><span class="ct">16</span></div>
<div class="td" style="left:666px;width:145px"><span class="ct">16</span></div>
<div class="td" style="left:811px;width:104px"></div>
<div class="td" style="left:915px;width:93px"></div>
<div class="td" style="left:1008px;width:93px"></div>
<div class="td" style="left:1101px;width:145px"><span class="ct">3100</span></div>
<div class="td" style="left:1246px;width:83px"><span class="ct">0</span></div>
<div class="td" style="left:1329px;width:72px"><span class="ct">0</span></div>
<div class="td" style="left:1401px;width:62px"></div>
</div>
</div>
<div class="btn" style="left:1552px;top:766px;width:60px;border:1px solid #dcdfe6;background:#fff;color:#606266">取消</div>
<div class="btn" style="left:1624px;top:766px;width:88px;border:1px solid #409eff;background:#409eff;color:#fff">申请开票</div>
</div></body></html>
